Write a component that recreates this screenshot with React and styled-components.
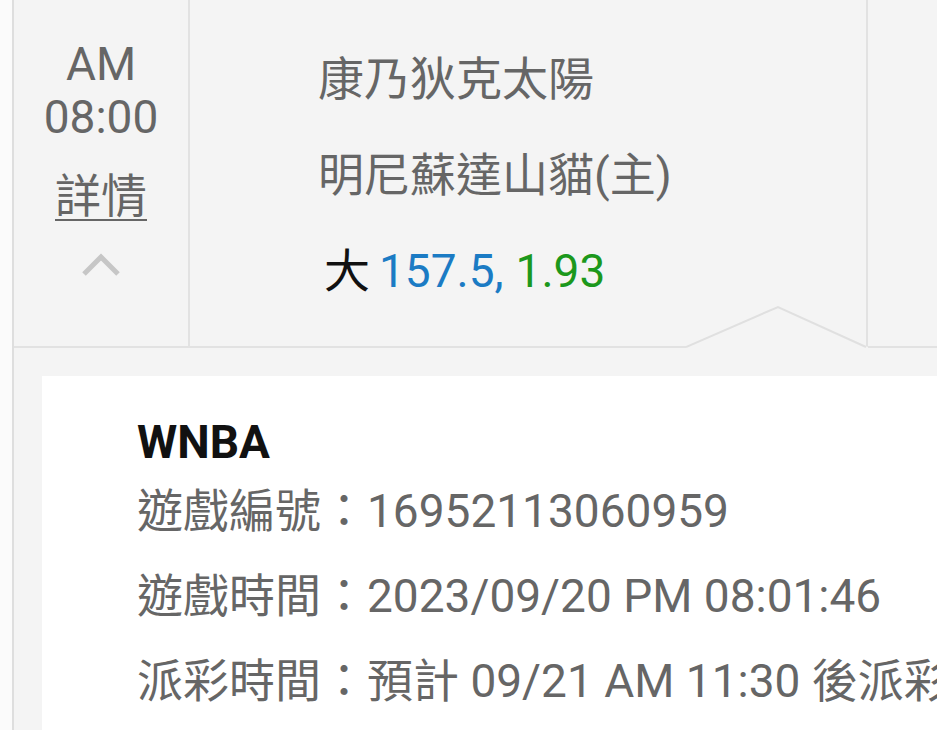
import React from "react";
import styled, { createGlobalStyle } from "styled-components";

const GlobalStyle = createGlobalStyle`
  html, body {
    margin: 0;
    padding: 0;
    background: #fbfbfb;
    overflow: hidden;
  }
  body {
    font-family: Roboto, "Noto Sans CJK TC", sans-serif;
  }
`;

const Page = styled.div`
  margin-left: 12px;
  border-left: 2px solid #dedede;
  background: #f4f4f4;
  min-height: 100vh;
  display: flex;
  flex-direction: column;
  color: #666;
  font-size: 46px;
`;

const Row = styled.div`
  display: grid;
  grid-template-columns: 176px 678px 1fr;
  height: 346px;
  border-bottom: 2px solid #e2e2e2;
`;

const TimeCell = styled.div`
  border-right: 2px solid #e2e2e2;
  display: flex;
  flex-direction: column;
  align-items: center;
  padding-top: 38px;
  line-height: 53px;
`;

const TimeLine = styled.div`
  white-space: nowrap;
`;

const DetailLink = styled.a`
  margin-top: 26px;
  color: #666;
  text-decoration: underline;
  text-decoration-thickness: 2px;
  text-underline-offset: 7px;
  cursor: pointer;
`;

const Chevron = styled.svg`
  margin-top: 30px;
  width: 40px;
  height: 24px;
`;

const TeamsCell = styled.div`
  position: relative;
  border-right: 2px solid #e2e2e2;
  padding: 31px 0 0 128px;
  line-height: 96px;
`;

const Team = styled.div`
  white-space: nowrap;
`;

const Odds = styled.div`
  white-space: nowrap;
  color: #111;
  padding-left: 6px;
`;

const Num = styled.span`
  color: ${(p) => p.$color};
  margin-left: ${(p) => p.$gap || 0}px;
`;

const Notch = styled.svg`
  position: absolute;
  right: -2px;
  bottom: -2px;
  width: 182px;
  height: 44px;
`;

const Detail = styled.div`
  flex: 1;
  display: flex;
  padding: 28px 0 0 28px;
`;

const Card = styled.div`
  flex: 1;
  background: #fff;
  padding: 40px 0 0 95px;
  overflow: hidden;
  white-space: nowrap;
`;

const League = styled.div`
  font-family: Roboto, sans-serif;
  font-weight: 700;
  color: #111;
  line-height: 53px;
`;

const InfoLine = styled.div`
  line-height: 85px;
`;

export default function App() {
  return (
    <>
      <GlobalStyle />
      <Page>
        <Row>
          <TimeCell>
            <TimeLine>AM</TimeLine>
            <TimeLine>08:00</TimeLine>
            <DetailLink>詳情</DetailLink>
            <Chevron viewBox="0 0 40 24">
              <polyline
                points="3,21 20,4 37,21"
                fill="none"
                stroke="#c6c6c6"
                strokeWidth="5"
              />
            </Chevron>
          </TimeCell>
          <TeamsCell>
            <Team>康乃狄克太陽</Team>
            <Team>明尼蘇達山貓(主)</Team>
            <Odds>
              大<Num $color="#1b7bc4" $gap={9}>157.5,</Num>
              <Num $color="#1c981c" $gap={12}>1.93</Num>
            </Odds>
            <Notch viewBox="0 0 182 44">
              <polygon points="0,44 0,43 92,3 182,43 182,44" fill="#f4f4f4" />
              <polyline
                points="0,43 92,3 180,43"
                fill="none"
                stroke="#e0e0e0"
                strokeWidth="2"
              />
            </Notch>
          </TeamsCell>
          <div />
        </Row>
        <Detail>
          <Card>
            <League>WNBA</League>
            <InfoLine>遊戲編號：16952113060959</InfoLine>
            <InfoLine>遊戲時間：2023/09/20 PM 08:01:46</InfoLine>
            <InfoLine>派彩時間：預計 09/21 AM 11:30 後派彩</InfoLine>
          </Card>
        </Detail>
      </Page>
    </>
  );
}
